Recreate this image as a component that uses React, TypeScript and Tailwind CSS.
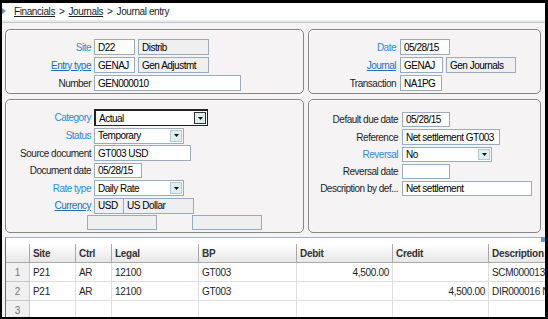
import React from 'react';

const font = { fontFamily: '"Liberation Sans", Arial, sans-serif' };

interface BoxProps {
  w: string;
  h?: string;
  value?: string;
  readOnly?: boolean;
  className?: string;
}

function Box({ w, h = 'h-[16px]', value, readOnly, className = '' }: BoxProps) {
  return (
    <div
      className={`${w} ${h} ${readOnly ? 'bg-[#efeff0]' : 'bg-white'} border border-[#9aabbd] flex items-center px-[3px] text-[10px] tracking-[-0.5px] text-black whitespace-nowrap overflow-hidden shrink-0 ${className}`}
    >
      {value}
    </div>
  );
}

function Drop({ w, h = 'h-[16px]', value, focused }: { w: string; h?: string; value: string; focused?: boolean }) {
  return (
    <div
      className={`${w} ${h} bg-white flex items-stretch shrink-0 ${
        focused ? 'border border-[#222] border-t-2 border-l-2' : 'border border-[#9aabbd]'
      }`}
    >
      <div className="flex-1 flex items-center px-[3px] text-[10px] tracking-[-0.5px] text-black">{value}</div>
      <div
        className={`w-[12px] my-[1px] mr-[1px] bg-[#dcefee] flex items-center justify-center ${
          focused ? 'border border-[#333]' : 'border border-[#b8c8d0]'
        }`}
      >
        <svg width="5" height="3" viewBox="0 0 5 3">
          <path d="M0 0h5L2.5 3z" fill="#111" />
        </svg>
      </div>
    </div>
  );
}

function Label({ w, text, kind }: { w: string; text: string; kind?: 'blue' | 'link' }) {
  const color =
    kind === 'blue' ? 'text-[#2c8bd8]' : kind === 'link' ? 'text-[#1b6ec4] underline' : 'text-[#1e1e1e]';
  return (
    <div className={`${w} shrink-0 text-right text-[10px] tracking-[-0.5px] whitespace-nowrap ${color}`}>{text}</div>
  );
}

function Row({ h = 'h-[16px]', gap = 'gap-[3px]', children }: { h?: string; gap?: string; children: React.ReactNode }) {
  return <div className={`flex items-center ${h} ${gap}`}>{children}</div>;
}

const panel =
  'border border-[#868686] rounded-[5px] shadow-[inset_1px_1px_0_#ffffff] bg-[#f6f3f5] flex flex-col';

const cols = 'grid grid-cols-[24px_46px_36px_87px_98px_96px_96px_140px]';

const rows = [
  { n: '1', site: 'P21', ctrl: 'AR', legal: '12100', bp: 'GT003', debit: '4,500.00', credit: '', desc: 'SCM000013' },
  { n: '2', site: 'P21', ctrl: 'AR', legal: '12100', bp: 'GT003', debit: '', credit: '4,500.00', desc: 'DIR000016 Net' },
  { n: '3', site: '', ctrl: '', legal: '', bp: '', debit: '', credit: '', desc: '' },
];

export default function App() {
  return (
    <div className="w-[548px] h-[319px] bg-black pt-[3px] pl-[2px] pr-[3px] pb-[2px]" style={font}>
      <div className="h-full bg-[#f6f3f5] flex flex-col overflow-hidden">
        {/* breadcrumb */}
        <div className="relative h-[17px] bg-white flex items-center pl-[12px] text-[10px] tracking-[-0.4px] text-[#1e1e1e] shrink-0">
          <svg className="absolute left-0 top-[5px]" width="4" height="6" viewBox="0 0 4 6">
            <path d="M0 0l4 3-4 3z" fill="#6d8fb0" />
          </svg>
          <span className="underline">Financials</span>
          <span className="px-[4px]">&gt;</span>
          <span className="underline">Journals</span>
          <span className="px-[4px]">&gt;</span>
          <span>Journal entry</span>
        </div>
        <div className="h-[2px] bg-[#e6eaef] shrink-0" />
        <div className="h-[1px] bg-[#b9c7d6] shrink-0" />

        {/* top panels */}
        <div className="flex gap-[4px] pl-[3px] pr-[4px] mt-[6px] shrink-0">
          <div className={`${panel} w-[299px] h-[65px] pt-[9px] gap-[2px]`}>
            <Row>
              <Label w="w-[85px]" text="Site" kind="blue" />
              <Box w="w-[41px]" value="D22" />
              <Box w="w-[71px]" value="Distrib" readOnly />
            </Row>
            <Row>
              <Label w="w-[85px]" text="Entry type " kind="link" />
              <Box w="w-[41px]" value="GENAJ" />
              <Box w="w-[71px]" value="Gen Adjustmt" readOnly />
            </Row>
            <Row>
              <Label w="w-[85px]" text="Number" />
              <Box w="w-[147px]" value="GEN000010" />
            </Row>
          </div>
          <div className={`${panel} flex-1 h-[65px] pt-[9px] gap-[2px]`}>
            <Row gap="gap-[4px]">
              <Label w="w-[87px]" text="Date" kind="blue" />
              <Box w="w-[50px]" value="05/28/15" />
            </Row>
            <Row gap="gap-[4px]">
              <Label w="w-[87px]" text="Journal" kind="link" />
              <div className="flex gap-[3px]">
                <Box w="w-[43px]" value="GENAJ" />
                <Box w="w-[70px]" value="Gen Journals" readOnly />
              </div>
            </Row>
            <Row gap="gap-[4px]">
              <Label w="w-[87px]" text="Transaction" />
              <Box w="w-[42px]" value="NA1PG" />
            </Row>
          </div>
        </div>

        {/* header panels */}
        <div className="flex gap-[4px] pl-[3px] pr-[4px] mt-[5px] shrink-0">
          <div className={`${panel} w-[299px] h-[134px] pt-[9px] gap-[1.5px]`}>
            <Row h="h-[17px]">
              <Label w="w-[85px]" text="Category" kind="blue" />
              <Drop w="w-[114px]" h="h-[17px]" value="Actual" focused />
            </Row>
            <Row>
              <Label w="w-[85px]" text="Status" kind="blue" />
              <Drop w="w-[90px]" value="Temporary" />
            </Row>
            <Row>
              <Label w="w-[85px]" text="Source document" />
              <Box w="w-[97px]" value="GT003 USD" />
            </Row>
            <Row>
              <Label w="w-[85px]" text="Document date" />
              <Box w="w-[48px]" h="h-[15px]" value="05/28/15" />
            </Row>
            <Row>
              <Label w="w-[85px]" text="Rate type" kind="blue" />
              <Drop w="w-[90px]" value="Daily Rate" />
            </Row>
            <Row>
              <Label w="w-[85px]" text="Currency" kind="link" />
              <div className="flex">
                <Box w="w-[30px]" value="USD" readOnly />
                <Box w="w-[71px]" value="US Dollar" readOnly className="-ml-px" />
              </div>
            </Row>
            <div className="flex h-[15px] pl-[81px] gap-[35px]">
              <Box w="w-[70px]" h="h-[15px]" readOnly />
              <Box w="w-[70px]" h="h-[15px]" readOnly />
            </div>
          </div>
          <div className={`${panel} flex-1 h-[134px] pt-[12px] gap-[2px]`}>
            <Row h="h-[15px]" gap="gap-[4px]">
              <Label w="w-[89px]" text="Default due date" />
              <Box w="w-[48px]" h="h-[15px]" value="05/28/15" />
            </Row>
            <Row gap="gap-[4px]">
              <Label w="w-[89px]" text="Reference" />
              <Box w="w-[98px]" value="Net settlement GT003" />
            </Row>
            <Row h="h-[15px]" gap="gap-[4px]">
              <Label w="w-[89px]" text="Reversal" kind="blue" />
              <Drop w="w-[90px]" h="h-[15px]" value="No" />
            </Row>
            <Row h="h-[15px]" gap="gap-[4px]">
              <Label w="w-[89px]" text="Reversal date" />
              <Box w="w-[48px]" h="h-[15px]" />
            </Row>
            <Row h="h-[15px]" gap="gap-[4px]">
              <Label w="w-[89px]" text="Description by def..." />
              <Box w="w-[130px]" h="h-[15px]" value="Net settlement" />
            </Row>
          </div>
        </div>

        {/* lines grid */}
        <div className="relative mt-[4px] ml-[3px] flex-1 bg-white border-t border-[#a3b1c2] border-l border-l-[#6a6a6a] pt-[6px] text-[10px] tracking-[-0.3px] text-[#1e1e1e]">
          <div className="absolute right-0 -top-[1px] w-[4px] h-[5px] bg-[#5a9fd6]" />
          <div className={`${cols} h-[19px] bg-gradient-to-b from-white to-[#e6e6e6] font-bold text-[#333]`}>
            {['', 'Site', 'Ctrl', 'Legal', 'BP', 'Debit', 'Credit', 'Description'].map((h, i) => (
              <div key={i} className="border-r border-b border-[#a9a9a9] flex items-center px-[3px] whitespace-nowrap">
                {h}
              </div>
            ))}
          </div>
          {rows.map((r) => (
            <div key={r.n} className={`${cols} h-[19px]`}>
              <div className="bg-[#f0f0f0] border-r border-b border-[#c9c9c9] flex items-center justify-center text-[#777]">
                {r.n}
              </div>
              <div className="border-r border-b border-[#dedede] flex items-center px-[3px]">{r.site}</div>
              <div className="border-r border-b border-[#dedede] flex items-center px-[3px]">{r.ctrl}</div>
              <div className="border-r border-b border-[#dedede] flex items-center px-[3px]">{r.legal}</div>
              <div className="border-r border-b border-[#dedede] flex items-center px-[3px]">{r.bp}</div>
              <div className="border-r border-b border-[#dedede] flex items-center justify-end px-[3px]">{r.debit}</div>
              <div className="border-r border-b border-[#dedede] flex items-center justify-end px-[3px]">{r.credit}</div>
              <div className="border-r border-b border-[#dedede] flex items-center px-[3px] whitespace-nowrap">{r.desc}</div>
            </div>
          ))}
        </div>
      </div>
    </div>
  );
}
